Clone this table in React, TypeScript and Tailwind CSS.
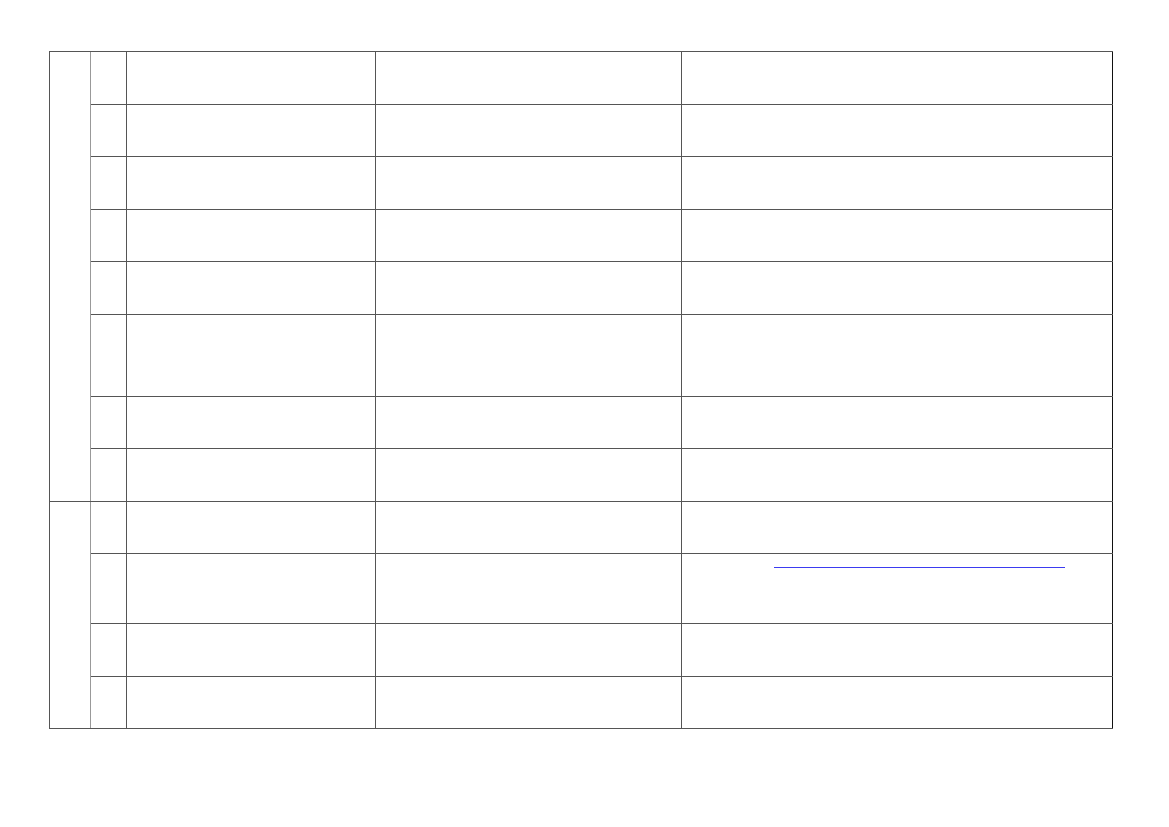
import React from 'react';

const groups = [
  [53, 52, 53, 52, 53, 82, 52, 53],
  [52, 70, 53, 52],
];

const App: React.FC = () => {
  return (
    <div className="min-h-[827px] w-[1169px] bg-white pt-[51px] pl-[49px] font-['Liberation_Sans',sans-serif]">
      <div className="flex w-[1064px] flex-col border-l border-t border-[#555]">
        {groups.map((rows, g) => (
          <div key={g} className="flex border-b border-[#555]">
            {/* group cell */}
            <div className="w-[41px] shrink-0 border-r border-[#999]" />
            <div className="flex flex-1 flex-col">
              {rows.map((h, i) => (
                <div
                  key={i}
                  className={`flex ${i < rows.length - 1 ? 'border-b border-[#555]' : ''}`}
                  style={{ height: i < rows.length - 1 ? h : h - 1 }}
                >
                  <div className="w-[36px] shrink-0 border-r border-[#555]" />
                  <div className="w-[249px] shrink-0 border-r border-[#555]" />
                  <div className="w-[306px] shrink-0 border-r border-[#555]" />
                  <div className="w-[431px] shrink-0 border-r border-[#111]">
                    {g === 1 && i === 1 && (
                      <div className="pl-[92px] pt-[13px]">
                        <div className="h-px w-[291px] bg-[#3b3bf0]" />
                      </div>
                    )}
                  </div>
                </div>
              ))}
            </div>
          </div>
        ))}
      </div>
    </div>
  );
};

export default App;
